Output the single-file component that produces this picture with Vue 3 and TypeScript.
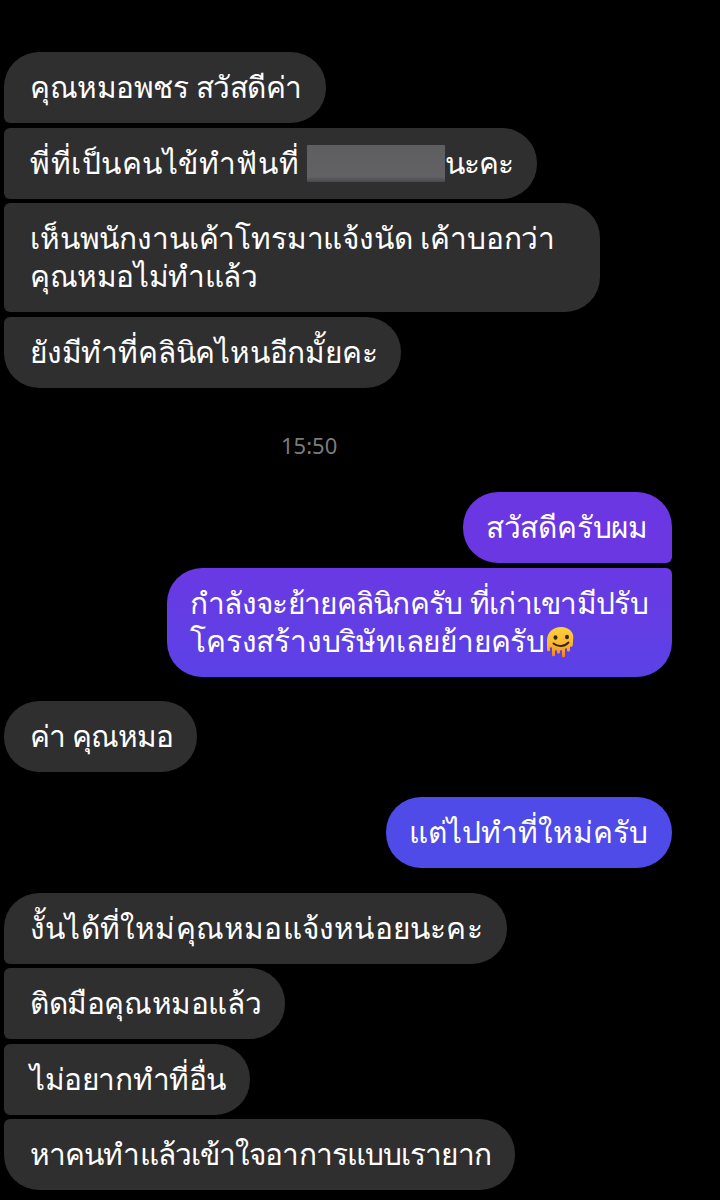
<script setup lang="ts">
type Line = { text: string, track?: number }
type Group = {
  side: 'in' | 'out'
  messages: Line[][]
}

// the screenshot's Thai face has slightly different widths, track is per line
const lastGroups: Group[] = [
  { side: 'in', messages: [[{ text: 'ค่า คุณหมอ', track: -1 }]] },
  { side: 'out', messages: [[{ text: 'แต่ไปทำที่ใหม่ครับ' }]] },
  {
    side: 'in',
    messages: [
      [{ text: 'งั้นได้ที่ใหม่คุณหมอแจ้งหน่อยนะคะ', track: 0.2 }],
      [{ text: 'ติดมือคุณหมอแล้ว', track: -0.4 }],
      [{ text: 'ไม่อยากทำที่อื่น', track: -0.4 }],
      [{ text: 'หาคนทำแล้วเข้าใจอาการแบบเรายาก', track: -0.9 }],
    ],
  },
]

function tracking(track = 0) {
  return { letterSpacing: `${track}px` }
}
</script>

<template>
  <main class="chat">
    <section class="group in">
      <div class="bubble in first">
        <span class="line" :style="tracking(-0.45)">คุณหมอพชร สวัสดีค่า</span>
      </div>
      <div class="bubble in">
        <span class="line"><span :style="tracking(0.55)">พี่ที่เป็นคนไข้ทำฟันที่ </span><span class="redact" /><span :style="tracking(-1)">นะคะ</span></span>
      </div>
      <div class="bubble in wide">
        <span class="line" :style="tracking(-0.15)">เห็นพนักงานเค้าโทรมาแจ้งนัด เค้าบอกว่า</span>
        <span class="line" :style="tracking(-0.4)">คุณหมอไม่ทำแล้ว</span>
      </div>
      <div class="bubble in last">
        <span class="line" :style="tracking(-0.2)">ยังมีทำที่คลินิคไหนอีกมั้ยคะ</span>
      </div>
    </section>

    <p class="time">15:50</p>

    <section class="group out">
      <div class="bubble out first hello">
        <span class="line" :style="tracking(-0.2)">สวัสดีครับผม</span>
      </div>
      <div class="bubble out last move">
        <span class="line" :style="tracking(-0.7)">กำลังจะย้ายคลินิกครับ ที่เก่าเขามีปรับ</span>
        <span class="line" :style="tracking(-0.2)">โครงสร้างบริษัทเลยย้ายครับ<svg class="emoji" viewBox="0 0 32 32" aria-hidden="true">
          <defs>
            <linearGradient id="melt" x1="0" y1="0" x2="0" y2="1">
              <stop offset="0" stop-color="#fdd13c" />
              <stop offset="0.6" stop-color="#f9b52e" />
              <stop offset="1" stop-color="#ee7f22" />
            </linearGradient>
          </defs>
          <path fill="url(#melt)" d="M16 1C8 1 2 6.500 2 14.500V24c0 1.800 3 1.800 3 0v-2c0-1 2-1 2 0v7c0 1.800 3 1.800 3 0v-4c0-1 2-1 2 0v1.500c0 1.500 3 1.500 3 0V25c0-1 2-1 2 0v5c0 1.800 3 1.800 3 0v-7c0-1 2-1 2 0v1.500c0 1.500 3 1.500 3 0V21c0-.8 2-.8 2 0 1-2 1-4 1-6.500C30 6.500 24 1 16 1z" />
          <ellipse cx="10.500" cy="11.500" rx="2" ry="2.300" fill="#3a2418" />
          <ellipse cx="22" cy="11" rx="2" ry="2.300" fill="#3a2418" />
          <path fill="none" stroke="#3a2418" stroke-width="1.900" stroke-linecap="round" d="M8.500 17.500c4 3.500 11 3.500 15-1" />
        </svg></span>
      </div>
    </section>

    <section
      v-for="(group, g) in lastGroups"
      :key="g"
      class="group"
      :class="group.side"
    >
      <div
        v-for="(msg, i) in group.messages"
        :key="i"
        class="bubble"
        :class="[
          group.side,
          { first: i === 0, last: i === group.messages.length - 1, blue: group.side === 'out' },
        ]"
      >
        <span
          v-for="line in msg"
          :key="line.text"
          class="line"
          :style="tracking(line.track)"
        >{{ line.text }}</span>
      </div>
    </section>
  </main>
</template>

<style>
html,
body {
  margin: 0;
  background: #000;
}
</style>

<style scoped>
.chat {
  box-sizing: border-box;
  height: 1200px;
  overflow: hidden;
  padding: 52px 48px 0 4px;
  background: #000;
  color: #fff;
  font-family: "Noto Sans", "Noto Sans CJK SC", sans-serif;
}

.group {
  display: flex;
  flex-direction: column;
  gap: 4.5px;
}

.group + .group {
  margin-top: 24.75px;
}

.group.in {
  align-items: flex-start;
}

.group.out {
  align-items: flex-end;
}

.bubble {
  box-sizing: border-box;
  padding: 16px 24px 17px 26px;
  border-radius: 35px;
  font-size: 29.8px;
  line-height: 38px;
}

.bubble.in {
  border-radius: 6px 35px 35px 6px;
  background: #2f2f2f;
}

.bubble.in.first {
  border-top-left-radius: 35px;
}

.bubble.in.last {
  border-bottom-left-radius: 35px;
}

.bubble.wide {
  width: 596px;
}

.bubble.out {
  border-radius: 35px 6px 6px 35px;
  padding-left: 23px;
}

.bubble.out.first {
  border-top-right-radius: 35px;
}

.bubble.out.last {
  border-bottom-right-radius: 35px;
}

.hello {
  background: #6b37e3;
}

.move {
  background: linear-gradient(180deg, #6a39e3, #5b42e6);
}

.bubble.blue {
  background: #4f4be8;
}

.line {
  display: block;
  white-space: nowrap;
}

.redact {
  display: inline-block;
  width: 138px;
  height: 37px;
  vertical-align: -8px;
  border-radius: 1px;
  background: linear-gradient(180deg, #5e5e60, #626264 85%, #4a4a4e);
}

.time {
  margin: 45.5px 0 35px;
  padding-left: 277px;
  color: #7b7b7b;
  font-size: 22px;
  line-height: 24px;
}

.emoji {
  display: inline-block;
  width: 32px;
  height: 32px;
  vertical-align: -6px;
}
</style>
